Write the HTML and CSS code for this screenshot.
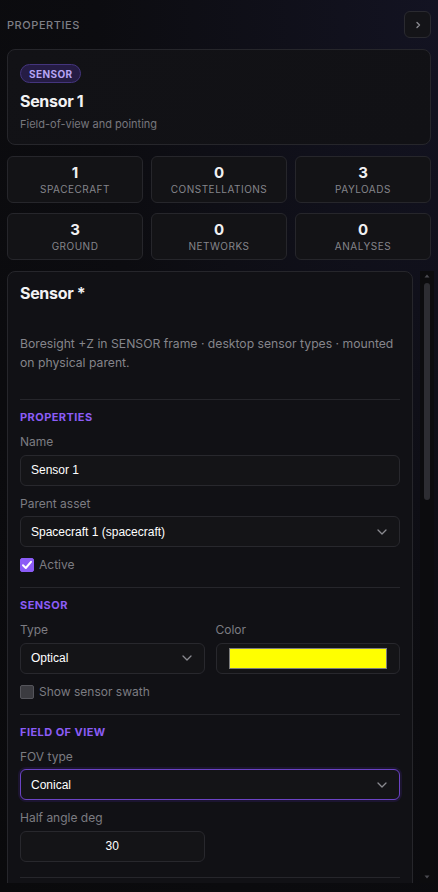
FILE: index.html
```html
<!DOCTYPE html>
<html lang="en">
<head>
<meta charset="utf-8">
<title>Properties</title>
<link rel="stylesheet" href="styles.css">
</head>
<body>
<div class="panel">
  <div class="panel-head">
    <span class="panel-title">PROPERTIES</span>
    <button class="collapse-btn" aria-label="Collapse">
      <svg width="10" height="10" viewBox="0 0 10 10"><path d="M4 2.5 L6.5 5 L4 7.5" fill="none" stroke="#8a8a90" stroke-width="1.4" stroke-linecap="round" stroke-linejoin="round"/></svg>
    </button>
  </div>

  <div class="summary">
    <span class="badge">SENSOR</span>
    <div class="summary-title">Sensor 1</div>
    <div class="summary-sub">Field-of-view and pointing</div>
  </div>

  <div class="stats">
    <div class="stat"><div class="stat-num">1</div><div class="stat-label">SPACECRAFT</div></div>
    <div class="stat"><div class="stat-num">0</div><div class="stat-label">CONSTELLATIONS</div></div>
    <div class="stat"><div class="stat-num">3</div><div class="stat-label">PAYLOADS</div></div>
    <div class="stat"><div class="stat-num">3</div><div class="stat-label">GROUND</div></div>
    <div class="stat"><div class="stat-num">0</div><div class="stat-label">NETWORKS</div></div>
    <div class="stat"><div class="stat-num">0</div><div class="stat-label">ANALYSES</div></div>
  </div>

  <div class="scroll-area">
    <div class="scroller">
      <div class="editor">
        <div class="editor-title">Sensor *</div>
        <p class="editor-desc">Boresight +Z in SENSOR frame · desktop sensor types · mounted on physical parent.</p>

        <section class="section">
          <h3 class="section-title">PROPERTIES</h3>
          <div class="field">
            <label class="label">Name</label>
            <div class="control"><span class="value">Sensor 1</span></div>
          </div>
          <div class="field">
            <label class="label">Parent asset</label>
            <div class="control select"><span class="value">Spacecraft 1 (spacecraft)</span>
              <svg class="chev" width="10" height="6" viewBox="0 0 10 6"><path d="M1 1 L5 5 L9 1" fill="none" stroke="#8a8a90" stroke-width="1.3" stroke-linecap="round" stroke-linejoin="round"/></svg></div>
          </div>
          <label class="check"><span class="box checked"><svg width="14" height="14" viewBox="0 0 14 14"><path d="M3 7.3 L5.8 10 L11 3.8" fill="none" stroke="#fff" stroke-width="2" stroke-linecap="round" stroke-linejoin="round"/></svg></span>Active</label>
        </section>

        <section class="section">
          <h3 class="section-title">SENSOR</h3>
          <div class="row2">
            <div class="field">
              <label class="label">Type</label>
              <div class="control select"><span class="value">Optical</span>
                <svg class="chev" width="10" height="6" viewBox="0 0 10 6"><path d="M1 1 L5 5 L9 1" fill="none" stroke="#8a8a90" stroke-width="1.3" stroke-linecap="round" stroke-linejoin="round"/></svg></div>
            </div>
            <div class="field">
              <label class="label">Color</label>
              <div class="control color"><span class="swatch"></span></div>
            </div>
          </div>
          <label class="check"><span class="box"></span>Show sensor swath</label>
        </section>

        <section class="section">
          <h3 class="section-title">FIELD OF VIEW</h3>
          <div class="field">
            <label class="label">FOV type</label>
            <div class="control select focus"><span class="value">Conical</span>
              <svg class="chev" width="10" height="6" viewBox="0 0 10 6"><path d="M1 1 L5 5 L9 1" fill="none" stroke="#8a8a90" stroke-width="1.3" stroke-linecap="round" stroke-linejoin="round"/></svg></div>
          </div>
          <div class="row2">
            <div class="field">
              <label class="label">Half angle deg</label>
              <div class="control num"><span class="value">30</span></div>
            </div>
            <div></div>
          </div>
        </section>

        <div class="section-rule"></div>
      </div>
    </div>
    <div class="scrollbar" aria-hidden="true">
      <svg class="sb-arrow" width="8" height="6" viewBox="0 0 8 6"><path d="M4 1.5 L6.5 4.5 L1.5 4.5 Z" fill="#4a4a50"/></svg>
      <div class="sb-track"><div class="sb-thumb"></div></div>
      <svg class="sb-arrow" width="8" height="6" viewBox="0 0 8 6"><path d="M4 4.5 L6.5 1.5 L1.5 1.5 Z" fill="#4a4a50"/></svg>
    </div>
  </div>
</div>
</body>
</html>
```

FILE: styles.css
```css
* { box-sizing: border-box; }

html, body {
  margin: 0;
  height: 100%;
}

body {
  background: radial-gradient(ellipse at 100% 0%, #131322 0%, #0c0c10 55%, #0a0a0c 100%);
  color: #ececef;
  font-family: Inter, "Noto Sans", "Liberation Sans", sans-serif;
  overflow: hidden;
}

.panel {
  height: 892px;
  padding: 11px 4px 9px 7px;
  display: flex;
  flex-direction: column;
}

.panel-head {
  display: flex;
  align-items: center;
  justify-content: space-between;
  height: 27px;
  flex: none;
  padding-right: 3px;
}

.panel-title {
  font-size: 11px;
  font-weight: 500;
  letter-spacing: 0.05em;
  color: #7f7f86;
}

.collapse-btn {
  width: 27px;
  height: 27px;
  border-radius: 6px;
  border: 1px solid #2a2a30;
  background: #141418;
  display: flex;
  align-items: center;
  justify-content: center;
  padding: 0;
}

.summary {
  flex: none;
  margin: 11px 3px 0 0;
  border: 1px solid #26262b;
  border-radius: 8px;
  background: linear-gradient(135deg, #121216 0%, #111115 100%);
  padding: 14px 12px 13px 12px;
  display: flex;
  flex-direction: column;
  align-items: flex-start;
}

.badge {
  display: flex;
  align-items: center;
  height: 19px;
  padding: 0 8px;
  border-radius: 10px;
  background: #251c44;
  border: 1px solid #44357e;
  color: #b6a4f4;
  font-size: 10px;
  font-weight: 700;
  letter-spacing: 0.04em;
}

.summary-title {
  margin-top: 8px;
  font-size: 16px;
  line-height: 20px;
  font-weight: 700;
  color: #f2f2f4;
  letter-spacing: -0.02em;
}

.summary-sub {
  margin-top: 6px;
  font-size: 11px;
  line-height: 14px;
  color: #77777d;
}

.stats {
  flex: none;
  margin: 11px 3px 0 0;
  display: grid;
  grid-template-columns: repeat(3, 1fr);
  column-gap: 8px;
  row-gap: 10px;
}

.stat {
  height: 47px;
  border: 1px solid #26262b;
  border-radius: 6px;
  background: #131316;
  text-align: center;
  padding-top: 7px;
}

.stat-num {
  font-size: 15px;
  line-height: 18px;
  font-weight: 700;
  color: #f0f0f2;
}

.stat-label {
  margin-top: 1px;
  font-size: 10px;
  line-height: 13px;
  letter-spacing: 0.05em;
  color: #85858b;
}

.scroll-area {
  margin-top: 11px;
  flex: 1;
  min-height: 0;
  display: flex;
  gap: 7px;
}

.scroller {
  flex: 1;
  min-width: 0;
  overflow: hidden;
}

.scrollbar {
  width: 14px;
  flex: none;
  display: flex;
  flex-direction: column;
  align-items: center;
  background: #0c0c0e;
  padding: 2px 0 3px 0;
}

.sb-arrow { flex: none; }

.sb-track {
  flex: 1;
  width: 100%;
  display: flex;
  justify-content: center;
  padding-top: 4px;
}

.sb-thumb {
  width: 6px;
  height: 217px;
  border-radius: 3px;
  background: #2d2d32;
}

.editor {
  border: 1px solid #26262b;
  border-radius: 8px;
  background: #111115;
  padding: 11px 12px 0 12px;
  min-height: 700px;
}

.editor-title {
  font-size: 16px;
  line-height: 20px;
  font-weight: 700;
  color: #f2f2f4;
  letter-spacing: -0.02em;
}

.editor-desc {
  margin: 31px 0 27px 0;
  font-size: 12.2px;
  line-height: 19px;
  color: #85858b;
}

.section {
  border-top: 1px solid #26262b;
  padding: 10px 0 15px 0;
  display: flex;
  flex-direction: column;
  gap: 10px;
}

.section-rule {
  border-top: 1px solid #26262b;
  height: 40px;
}

.section-title {
  margin: 0;
  font-size: 11px;
  line-height: 14px;
  font-weight: 700;
  letter-spacing: 0.04em;
  color: #8b5cf6;
}

.field {
  display: flex;
  flex-direction: column;
  gap: 4.5px;
  min-width: 0;
}

.label {
  font-size: 12px;
  line-height: 16px;
  color: #7c7c82;
}

.control {
  height: 31px;
  border: 1px solid #28282d;
  border-radius: 6px;
  background: #141417;
  display: flex;
  align-items: center;
  padding: 0 10px;
  font-family: "Liberation Sans", Arial, sans-serif;
  font-size: 12px;
  color: #ffffff;
}

.control .value { flex: 1; }

.select .chev { margin-right: 2px; }

.focus {
  border-color: #6b43c4;
  box-shadow: 0 0 0 2px #1c1530;
}

.num .value { text-align: center; }

.color { padding: 0 12px; }

.swatch {
  flex: 1;
  height: 21px;
  background: #ffff00;
  border: 1px solid #7d7d7d;
}

.row2 {
  display: grid;
  grid-template-columns: 1fr 1fr;
  column-gap: 11px;
}

.check {
  display: flex;
  align-items: center;
  gap: 5px;
  height: 14px;
  font-size: 12px;
  line-height: 14px;
  color: #7c7c82;
  margin-top: 1px;
}

.box {
  width: 14px;
  height: 14px;
  flex: none;
  border-radius: 2px;
  background: #3b3b40;
  border: 1px solid #55555b;
  display: inline-flex;
}

.box.checked {
  background: #8b5cf6;
  border-color: #8b5cf6;
}

.box.checked svg { margin: -1px; }
```
